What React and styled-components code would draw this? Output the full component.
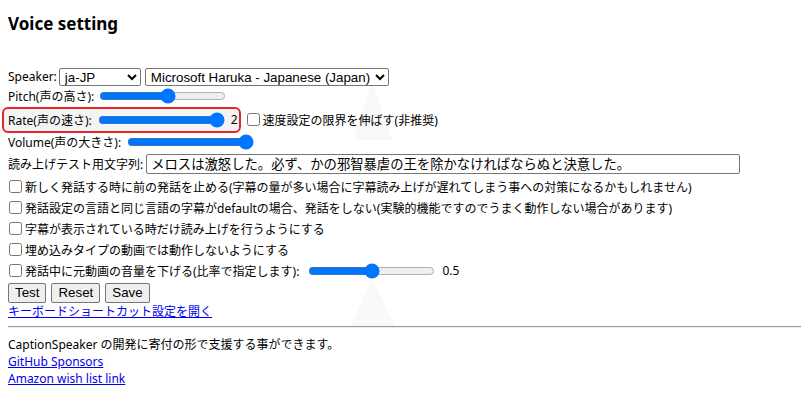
import React from "react";
import styled, { createGlobalStyle } from "styled-components";

const GlobalStyle = createGlobalStyle`
  body {
    margin: 0;
    background: #fff;
    color: #000;
    font-family: "Noto Sans", "Noto Sans CJK JP", sans-serif;
    font-size: 12px;
  }
`;

const Page = styled.div`
  position: relative;
  padding: 14px 8px 8px;
`;

const Glow = styled.svg`
  position: absolute;
  left: 0;
  top: 0;
  width: 809px;
  height: 402px;
  pointer-events: none;
  z-index: 0;
`;

const Content = styled.div`
  position: relative;
  z-index: 1;
`;

const Title = styled.h2`
  margin: 0 0 33px;
  font-size: 17px;
  line-height: 20px;
  font-weight: 700;
`;

const Row = styled.div`
  display: flex;
  align-items: center;
  height: ${props => props.h || 21}px;
  white-space: nowrap;
`;

const Label = styled.span`
  margin-right: ${props => props.gap || 4}px;
`;

const Select = styled.select`
  font-family: "Liberation Sans", Arial, sans-serif;
  font-size: 13.33px;
  height: 18px;
  width: ${props => props.w}px;
  margin-right: 4px;
  padding: 0 1px;
  border: 1px solid #767676;
  border-radius: 2px;
  background: #fff;
  color: #000;
`;

const Slider = styled.input.attrs({ type: "range" })`
  width: 127px;
  height: 16px;
  margin: 0 ${props => props.mr || 4}px 0 ${props => props.ml || 2}px;
  accent-color: #0075ff;
`;

const Value = styled.span`
  font-size: 12px;
`;

const Highlight = styled.div`
  display: inline-flex;
  align-items: center;
  height: 22px;
  padding: 0 1px 0 4px;
  margin-left: -6px;
  border: 2px solid #e5252c;
  border-radius: 6px;
  background: #f4f4f4;
`;

const Check = styled.input.attrs({ type: "checkbox" })`
  width: 13px;
  height: 13px;
  margin: 0 3px 0 ${props => props.ml || 1}px;
`;

const TextField = styled.input`
  font-family: "Noto Sans CJK JP", sans-serif;
  font-size: 13.33px;
  width: 594px;
  height: 20px;
  box-sizing: border-box;
  padding: 0 4px;
  border: 1px solid #767676;
  border-radius: 2px;
`;

const Buttons = styled.div`
  display: flex;
  gap: 5px;
  height: 21px;
  margin-top: 1px;
  align-items: center;
`;

const Button = styled.button`
  font-family: "Liberation Sans", Arial, sans-serif;
  font-size: 13.33px;
  height: 20px;
  padding: 0 6px;
  border: 1px solid #767676;
  border-radius: 2px;
  background: #efefef;
  color: #000;
`;

const Link = styled.a`
  display: block;
  color: #0000ee;
  text-decoration: underline;
  line-height: 17px;
  width: fit-content;
`;

const Divider = styled.hr`
  margin: 6px 0 8px;
  border: 0;
  border-top: 1px solid #9a9a9a;
  border-bottom: 1px solid #eee;
`;

const Note = styled.div`
  line-height: 17px;
`;

const options = [
  "新しく発話する時に前の発話を止める(字幕の量が多い場合に字幕読み上げが遅れてしまう事への対策になるかもしれません)",
  "発話設定の言語と同じ言語の字幕がdefaultの場合、発話をしない(実験的機能ですのでうまく動作しない場合があります)",
  "字幕が表示されている時だけ読み上げを行うようにする",
  "埋め込みタイプの動画では動作しないようにする"
];

export default function App() {
  return (
    <Page>
      <GlobalStyle />
      <Glow viewBox="0 0 809 402">
        <polygon points="372,80 354,140 392,140" fill="#f9f9f9" />
        <polygon points="372,278 350,328 396,328" fill="#f9f9f9" />
      </Glow>
      <Content>
        <Title>Voice setting</Title>
        <Row h={19}>
          <Label gap={2}>Speaker:</Label>
          <Select w={82} defaultValue="ja-JP">
            <option>ja-JP</option>
          </Select>
          <Select w={244} defaultValue="haruka">
            <option value="haruka">Microsoft Haruka - Japanese (Japan)</option>
          </Select>
        </Row>
        <Row h={20}>
          <Label>Pitch(声の高さ):</Label>
          <Slider min="0" max="100" defaultValue="55" ml={1} />
        </Row>
        <Row h={27}>
          <Highlight>
            <Label>Rate(声の速さ):</Label>
            <Slider min="0" max="2" step="0.1" defaultValue="2" mr={6} />
            <Value>2</Value>
          </Highlight>
          <Check ml={6} />
          <span>速度設定の限界を伸ばす(非推奨)</span>
        </Row>
        <Row h={18}>
          <Label>Volume(声の大きさ):</Label>
          <Slider min="0" max="1" step="0.1" defaultValue="1" />
        </Row>
        <Row h={25}>
          <Label gap={3}>読み上げテスト用文字列:</Label>
          <TextField defaultValue="メロスは激怒した。必ず、かの邪智暴虐の王を除かなければならぬと決意した。" />
        </Row>
        {options.map(text => (
          <Row key={text}>
            <Check />
            <span>{text}</span>
          </Row>
        ))}
        <Row>
          <Check />
          <Label>発話中に元動画の音量を下げる(比率で指定します):</Label>
          <Slider min="0" max="1" step="0.1" defaultValue="0.5" ml={5} mr={7} />
          <Value>0.5</Value>
        </Row>
        <Buttons>
          <Button>Test</Button>
          <Button>Reset</Button>
          <Button>Save</Button>
        </Buttons>
        <Link href="#">キーボードショートカット設定を開く</Link>
        <Divider />
        <Note>CaptionSpeaker の開発に寄付の形で支援する事ができます。</Note>
        <Link href="#">GitHub Sponsors</Link>
        <Link href="#">Amazon wish list link</Link>
      </Content>
    </Page>
  );
}
